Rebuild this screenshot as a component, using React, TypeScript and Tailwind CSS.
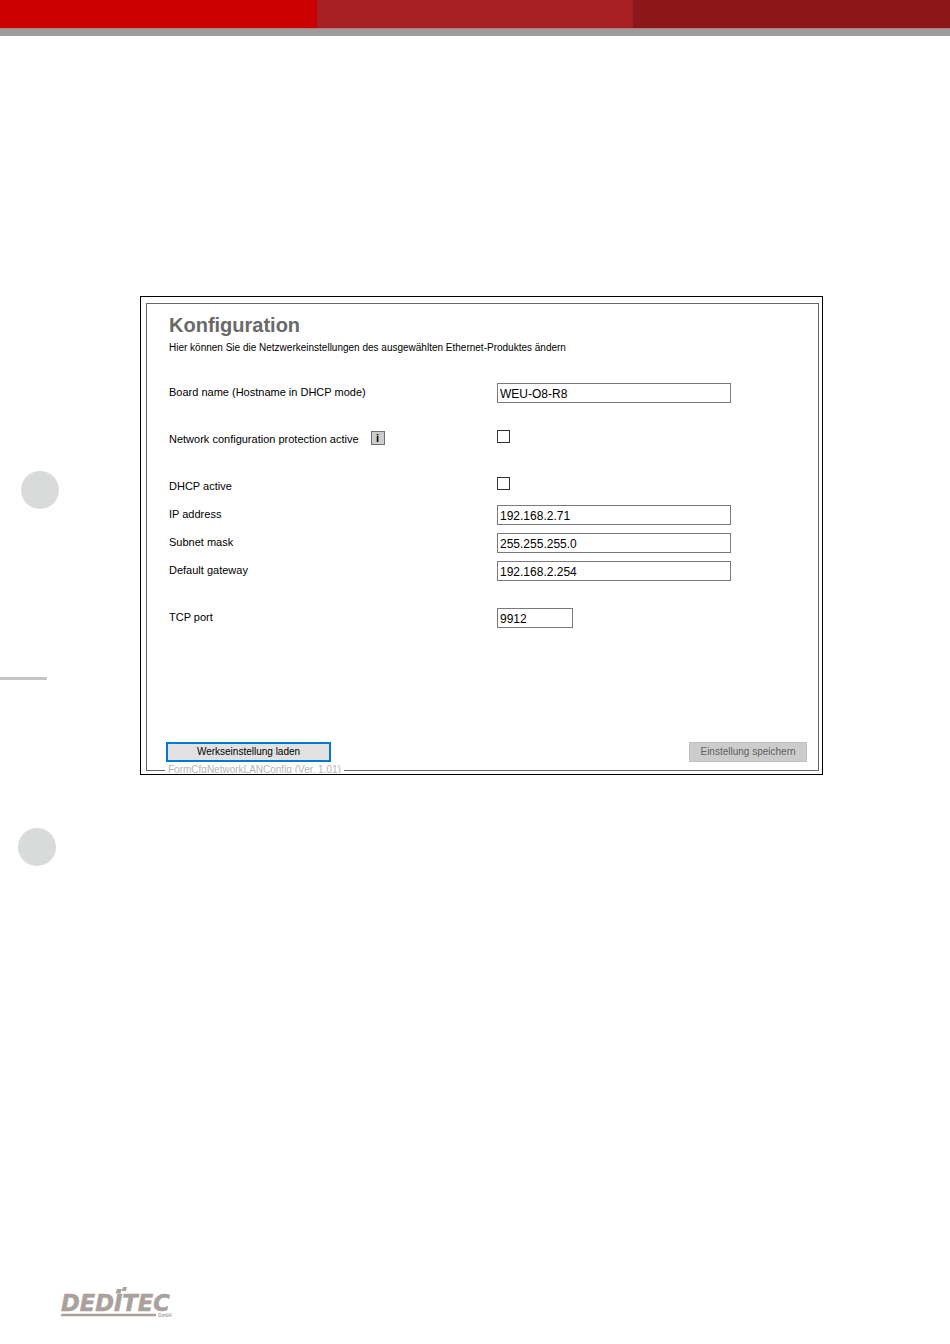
import { useState } from 'react';
import type { ReactNode } from 'react';

interface RowProps {
  id: string;
  label: string;
  extra?: ReactNode;
  children: ReactNode;
}

function Row({ id, label, extra, children }: RowProps) {
  return (
    <div className="flex h-7 items-start pt-1">
      <div className="flex w-[328px] items-start gap-3">
        <label htmlFor={id} className="text-[11px] leading-[18px]">{label}</label>
        {extra}
      </div>
      {children}
    </div>
  );
}

interface TextFieldProps {
  id: string;
  value: string;
  onChange: (val: string) => void;
  short?: boolean;
}

function TextField({ id, value, onChange, short }: TextFieldProps) {
  return (
    <input
      id={id}
      type="text"
      value={value}
      onChange={e => onChange(e.target.value)}
      className={`h-5 border border-[#7a7a7a] bg-white px-0.5 pt-0.5 text-xs leading-4 outline-none ${short ? 'w-[76px]' : 'w-[234px]'}`}
    />
  );
}

interface CheckFieldProps {
  id: string;
  checked: boolean;
  onChange: (val: boolean) => void;
}

function CheckField({ id, checked, onChange }: CheckFieldProps) {
  return (
    <input
      id={id}
      type="checkbox"
      checked={checked}
      onChange={e => onChange(e.target.checked)}
      className="size-[13px] appearance-none border border-[#333333] bg-white checked:bg-[#333333]"
    />
  );
}

function Logo() {
  return (
    <svg width="112" height="34" viewBox="0 0 112 34" fill="#aaa19d" role="img" aria-label="DEDITEC GmbH">
      <text
        x="1"
        y="27"
        fontFamily="'DejaVu Sans', sans-serif"
        fontSize="22.600"
        fontWeight="700"
        fontStyle="italic"
        stroke="#aaa19d"
        strokeWidth="0.5"
      >
        DEDITEC
      </text>
      <path d="M57 5h4.800l-1.400 4.500h-4.800z" />
      <path d="M63 3h4l-1.200 4h-4z" />
      <path d="M1.500 29.700h94.500v2.600H0.800z" />
      <text x="98" y="33" fontFamily="'Liberation Sans', sans-serif" fontSize="4.500" fontWeight="700">GmbH</text>
    </svg>
  );
}

export default function App() {
  const [boardName, setBoardName] = useState('WEU-O8-R8');
  const [isProtected, setIsProtected] = useState(false);
  const [dhcp, setDhcp] = useState(false);
  const [ip, setIp] = useState('192.168.2.71');
  const [subnet, setSubnet] = useState('255.255.255.0');
  const [gateway, setGateway] = useState('192.168.2.254');
  const [port, setPort] = useState('9912');

  return (
    <div className="flex min-h-screen flex-col bg-white font-['Liberation_Sans',Arial,sans-serif] text-black">
      <header>
        <div className="grid h-7 grid-cols-3">
          <div className="bg-[#cc0000]" />
          <div className="bg-[#a91e22]" />
          <div className="bg-[#8b1719]" />
        </div>
        <div className="h-2 border-t border-[#b08080] bg-[#9c9c9c]" />
      </header>

      <div className="flex flex-1 items-start">
        {/* Punch holes and fold mark */}
        <div className="w-[140px] shrink-0 pt-[435px]">
          <div className="ml-[21px] size-[38px] rounded-full bg-[#d9dbdb]" />
          <div className="mt-[168px] h-[3px] w-[47px] bg-[#c6c6c6]" />
          <div className="mt-[148px] ml-[18px] size-[38px] rounded-full bg-[#d9dbdb]" />
        </div>

        <main className="mt-[260px] mr-[127px] flex-1 border border-black pt-1.5 pr-[3px] pb-[3px] pl-[5px]">
          <form className="relative border border-[#666666] pt-[7px] pb-2" onSubmit={e => e.preventDefault()}>
            <div className="pl-[22px]">
              <h1 className="text-xl leading-7 font-bold text-[#696969]">Konfiguration</h1>
              <p className="text-[10px] leading-[18px]">
                Hier können Sie die Netzwerkeinstellungen des ausgewählten Ethernet-Produktes ändern
              </p>

              <div className="mt-[22px] flex flex-col gap-[19px]">
                <Row id="board" label="Board name (Hostname in DHCP mode)">
                  <TextField id="board" value={boardName} onChange={setBoardName} />
                </Row>
                <Row
                  id="protection"
                  label="Network configuration protection active"
                  extra={
                    <button
                      type="button"
                      className="mt-px flex size-3.5 items-center justify-center border border-[#707070] bg-[#cccccc] text-[11px] leading-3 font-bold"
                    >
                      i
                    </button>
                  }
                >
                  <CheckField id="protection" checked={isProtected} onChange={setIsProtected} />
                </Row>
                <div>
                  <Row id="dhcp" label="DHCP active">
                    <CheckField id="dhcp" checked={dhcp} onChange={setDhcp} />
                  </Row>
                  <Row id="ip" label="IP address">
                    <TextField id="ip" value={ip} onChange={setIp} />
                  </Row>
                  <Row id="subnet" label="Subnet mask">
                    <TextField id="subnet" value={subnet} onChange={setSubnet} />
                  </Row>
                  <Row id="gateway" label="Default gateway">
                    <TextField id="gateway" value={gateway} onChange={setGateway} />
                  </Row>
                </div>
                <Row id="port" label="TCP port">
                  <TextField id="port" value={port} onChange={setPort} short />
                </Row>
              </div>
            </div>

            <div className="mt-[110px] flex justify-between pr-[11px] pl-[19px] text-[10px]">
              <button type="button" className="h-5 w-[165px] border-2 border-[#0078d7] bg-[#e1e1e1] leading-4">
                Werkseinstellung laden
              </button>
              <button type="submit" disabled className="h-5 w-[118px] border border-[#bfbfbf] bg-[#cccccc] leading-4 text-[#606060]">
                Einstellung speichern
              </button>
            </div>

            {/* Form version, cut off by the lower edge */}
            <div className="absolute -bottom-[3px] left-[18px] h-[9px] overflow-hidden bg-white px-[3px] text-[10px] leading-3 text-[#b4b4b4]">
              FormCfgNetworkLANConfig (Ver. 1.01)
            </div>
          </form>
        </main>
      </div>

      <footer className="pb-[26px] pl-[60px]">
        <Logo />
      </footer>
    </div>
  );
}
